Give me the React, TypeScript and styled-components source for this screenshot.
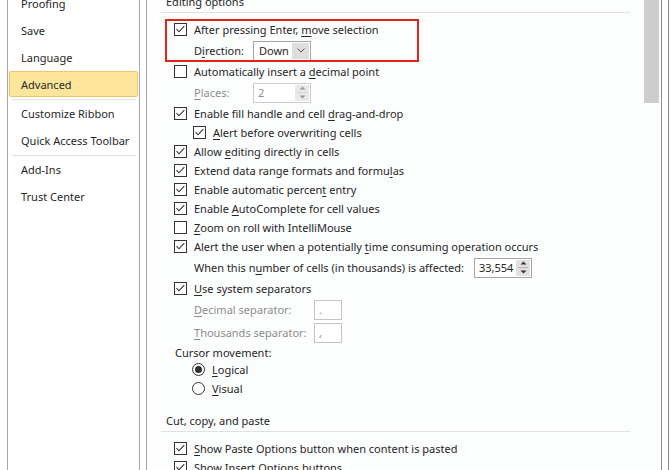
import React from "react";
import styled, { createGlobalStyle } from "styled-components";

const GlobalStyle = createGlobalStyle`
  html, body {
    margin: 0;
    padding: 0;
    background: #ffffff;
  }

  body {
    font-family: "Noto Sans", "Open Sans", sans-serif;
    font-size: 11px;
    color: #262626;
  }
`;

const navItems = [
  { label: "Proofing" },
  { label: "Save" },
  { label: "Language" },
  { label: "Advanced", active: true, divider: true },
  { label: "Customize Ribbon" },
  { label: "Quick Access Toolbar", divider: true },
  { label: "Add-Ins" },
  { label: "Trust Center" },
];

const CheckBox = ({ checked }: { checked?: boolean }) => (
  <Box>
    {checked && (
      <svg width="11" height="11" viewBox="0 0 11 11">
        <polyline
          points="1.5,5.2 4,7.8 9.3,2.2"
          fill="none"
          stroke="#333"
          strokeWidth="1.1"
        />
      </svg>
    )}
  </Box>
);

const Arrows = ({ disabled }: { disabled?: boolean }) => (
  <SpinButtons $disabled={disabled}>
    <svg width="7" height="4" viewBox="0 0 7 4">
      <polygon points="0.5,3.5 3.5,0.5 6.5,3.5" fill={disabled ? "#9a9a9a" : "#333"} />
    </svg>
    <SpinLine $disabled={disabled} />
    <svg width="7" height="4" viewBox="0 0 7 4">
      <polygon points="0.5,0.5 3.5,3.5 6.5,0.5" fill={disabled ? "#9a9a9a" : "#333"} />
    </svg>
  </SpinButtons>
);

const App = () => {
  return (
    <>
      <GlobalStyle />
      <Window>
        <Gutter $width={7} />
        <Sidebar>
          <NavList>
            {navItems.map((item) => (
              <React.Fragment key={item.label}>
                <NavItem $active={item.active}>{item.label}</NavItem>
                {item.divider && <NavDivider />}
              </React.Fragment>
            ))}
          </NavList>
        </Sidebar>
        <Gutter $width={6} />
        <Panel>
          <ScrollArea>
            <Sections>
              <SectionTitle>Editing options</SectionTitle>
              <SectionBody>
                <Highlighted>
                  <RedFrame />
                  <CheckRow>
                    <CheckBox checked />
                    <span>
                      After pressing Enter, <Key>m</Key>ove selection
                    </span>
                  </CheckRow>
                  <FieldRow>
                    <FieldLabel $width={59}>
                      D<Key>i</Key>rection:
                    </FieldLabel>
                    <Select>
                      <SelectValue>Down</SelectValue>
                      <SelectButton>
                        <svg width="8" height="5" viewBox="0 0 8 5">
                          <polyline
                            points="0.5,0.5 4,4 7.5,0.5"
                            fill="none"
                            stroke="#555"
                            strokeWidth="1"
                          />
                        </svg>
                      </SelectButton>
                    </Select>
                  </FieldRow>
                </Highlighted>
                <CheckRow>
                  <CheckBox />
                  <span>
                    Automatically insert a <Key>d</Key>ecimal point
                  </span>
                </CheckRow>
                <FieldRow>
                  <FieldLabel $width={59} $disabled>
                    <Key>P</Key>laces:
                  </FieldLabel>
                  <Spinner $disabled>
                    <SpinValue $disabled>2</SpinValue>
                    <Arrows disabled />
                  </Spinner>
                </FieldRow>
                <CheckRow>
                  <CheckBox checked />
                  <span>
                    Enable fill handle and cell <Key>d</Key>rag-and-drop
                  </span>
                </CheckRow>
                <CheckRow $indent={19}>
                  <CheckBox checked />
                  <span>
                    <Key>A</Key>lert before overwriting cells
                  </span>
                </CheckRow>
                <CheckRow>
                  <CheckBox checked />
                  <span>
                    Allow <Key>e</Key>diting directly in cells
                  </span>
                </CheckRow>
                <CheckRow>
                  <CheckBox checked />
                  <span>
                    Extend data range formats and formu<Key>l</Key>as
                  </span>
                </CheckRow>
                <CheckRow>
                  <CheckBox checked />
                  <span>
                    Enable automatic percen<Key>t</Key> entry
                  </span>
                </CheckRow>
                <CheckRow>
                  <CheckBox checked />
                  <span>
                    Enable <Key>A</Key>utoComplete for cell values
                  </span>
                </CheckRow>
                <CheckRow>
                  <CheckBox />
                  <span>
                    <Key>Z</Key>oom on roll with IntelliMouse
                  </span>
                </CheckRow>
                <CheckRow>
                  <CheckBox checked />
                  <span>
                    Alert the user when a potentially <Key>t</Key>ime consuming
                    operation occurs
                  </span>
                </CheckRow>
                <FieldRow>
                  <FieldLabel $width={280}>
                    When this n<Key>u</Key>mber of cells (in thousands) is
                    affected:
                  </FieldLabel>
                  <Spinner>
                    <SpinValue>33,554</SpinValue>
                    <Arrows />
                  </Spinner>
                </FieldRow>
                <CheckRow>
                  <CheckBox checked />
                  <span>
                    <Key>U</Key>se system separators
                  </span>
                </CheckRow>
                <FieldRow>
                  <FieldLabel $width={120} $disabled>
                    <Key>D</Key>ecimal separator:
                  </FieldLabel>
                  <SmallInput>.</SmallInput>
                </FieldRow>
                <FieldRow>
                  <FieldLabel $width={120} $disabled>
                    <Key>T</Key>housands separator:
                  </FieldLabel>
                  <SmallInput>,</SmallInput>
                </FieldRow>
                <GroupLabel>Cursor movement:</GroupLabel>
                <RadioRow>
                  <Radio $checked />
                  <span>
                    <Key>L</Key>ogical
                  </span>
                </RadioRow>
                <RadioRow>
                  <Radio />
                  <span>
                    <Key>V</Key>isual
                  </span>
                </RadioRow>
              </SectionBody>

              <SectionTitle $spaced>Cut, copy, and paste</SectionTitle>
              <SectionBody>
                <CheckRow>
                  <CheckBox checked />
                  <span>
                    <Key>S</Key>how Paste Options button when content is pasted
                  </span>
                </CheckRow>
                <CheckRow>
                  <CheckBox checked />
                  <span>
                    Show Insert <Key>O</Key>ptions buttons
                  </span>
                </CheckRow>
              </SectionBody>
            </Sections>
          </ScrollArea>
          <Scrollbar>
            <Thumb />
          </Scrollbar>
        </Panel>
        <Gutter $width={6} />
        <OuterEdge />
      </Window>
    </>
  );
};

const Window = styled.div`
  display: flex;
  width: 671px;
  height: 470px;
  overflow: hidden;
  background: #ffffff;
`;

const Gutter = styled.div<{ $width: number }>`
  flex: none;
  width: ${({ $width }) => $width}px;
`;

const Sidebar = styled.nav`
  flex: none;
  width: 131px;
  border-left: 1px solid #a6a6a6;
  border-right: 1px solid #a6a6a6;
  overflow: hidden;
`;

const NavList = styled.div`
  display: flex;
  flex-direction: column;
  margin-top: -10px;
`;

const NavItem = styled.div<{ $active?: boolean }>`
  display: flex;
  align-items: center;
  box-sizing: border-box;
  height: 27px;
  padding-left: 13px;
  white-space: nowrap;

  ${({ $active }) =>
    $active &&
    `
    height: 26px;
    margin: 0 1px 1px;
    padding-left: 11px;
    background: #fde59c;
    border: 1px solid #f1c36a;
    border-radius: 2px;
  `}
`;

const NavDivider = styled.div`
  height: 1px;
  margin: 1px 3px 0 4px;
  background: #e1e1e1;
`;

const Panel = styled.div`
  flex: none;
  display: flex;
  width: 514px;
  border-left: 1px solid #a6a6a6;
  border-right: 1px solid #8a8a8a;
  background: #fcfdfd;
`;

const ScrollArea = styled.div`
  flex: 1;
  overflow: hidden;
`;

const Sections = styled.div`
  margin-top: -10px;
  padding: 0 14px;
`;

const SectionTitle = styled.div<{ $spaced?: boolean }>`
  display: flex;
  align-items: center;
  box-sizing: border-box;
  height: 23px;
  margin-top: ${({ $spaced }) => ($spaced ? "11px" : "0")};
  padding-left: 5px;
  border-bottom: 1px solid #e1e1e1;
`;

const SectionBody = styled.div`
  display: flex;
  flex-direction: column;
  padding: 7px 0 0 13px;
`;

const Highlighted = styled.div`
  position: relative;
`;

const RedFrame = styled.div`
  position: absolute;
  left: -9px;
  top: -1px;
  width: 254px;
  height: 43px;
  box-sizing: border-box;
  border: 2px solid #e3231b;
  pointer-events: none;
`;

const Key = styled.span`
  text-decoration: underline;
  text-underline-offset: 2px;
`;

const CheckRow = styled.div<{ $indent?: number }>`
  display: flex;
  align-items: center;
  gap: 7px;
  height: 19px;
  padding-left: ${({ $indent }) => $indent ?? 0}px;
  white-space: nowrap;
`;

const Box = styled.span`
  flex: none;
  display: flex;
  align-items: center;
  justify-content: center;
  box-sizing: border-box;
  width: 13px;
  height: 13px;
  border: 1px solid #333333;
  background: #ffffff;
`;

const FieldRow = styled.div`
  display: flex;
  align-items: center;
  height: 23px;
  padding-left: 20px;
  white-space: nowrap;
`;

const FieldLabel = styled.span<{ $width: number; $disabled?: boolean }>`
  flex: none;
  width: ${({ $width }) => $width}px;
  color: ${({ $disabled }) => ($disabled ? "#8d8d8d" : "#262626")};
`;

const Select = styled.div`
  display: flex;
  box-sizing: border-box;
  width: 58px;
  height: 20px;
  padding: 1px;
  border: 1px solid #a5a5a5;
  background: #ffffff;
`;

const SelectValue = styled.span`
  flex: 1;
  display: flex;
  align-items: center;
  padding-left: 4px;
`;

const SelectButton = styled.span`
  display: flex;
  align-items: center;
  justify-content: center;
  width: 17px;
  background: #dedede;
`;

const Spinner = styled.div<{ $disabled?: boolean }>`
  display: flex;
  box-sizing: border-box;
  width: 58px;
  height: 20px;
  padding: 1px;
  border: 1px solid ${({ $disabled }) => ($disabled ? "#cccccc" : "#a5a5a5")};
  background: #ffffff;
`;

const SpinValue = styled.span<{ $disabled?: boolean }>`
  flex: 1;
  display: flex;
  align-items: center;
  padding-left: 3px;
  color: ${({ $disabled }) => ($disabled ? "#8d8d8d" : "#262626")};
`;

const SpinButtons = styled.span<{ $disabled?: boolean }>`
  display: flex;
  flex-direction: column;
  align-items: center;
  justify-content: space-evenly;
  width: 14px;
  background: ${({ $disabled }) => ($disabled ? "#e8e8e8" : "#e1e1e1")};
`;

const SpinLine = styled.span<{ $disabled?: boolean }>`
  width: 10px;
  height: 1px;
  background: ${({ $disabled }) => ($disabled ? "#d4d4d4" : "#b5b5b5")};
`;

const SmallInput = styled.div`
  display: flex;
  align-items: center;
  box-sizing: border-box;
  width: 28px;
  height: 20px;
  padding-left: 4px;
  border: 1px solid #c4c4c4;
  background: #ffffff;
  color: #8d8d8d;
`;

const GroupLabel = styled.div`
  display: flex;
  align-items: center;
  height: 16px;
  padding-left: 1px;
`;

const RadioRow = styled.div`
  display: flex;
  align-items: center;
  gap: 7px;
  height: 19px;
  padding-left: 18px;
`;

const Radio = styled.span<{ $checked?: boolean }>`
  flex: none;
  display: flex;
  align-items: center;
  justify-content: center;
  box-sizing: border-box;
  width: 13px;
  height: 13px;
  border: 1px solid #333333;
  border-radius: 50%;
  background: #ffffff;

  &::after {
    content: "";
    display: ${({ $checked }) => ($checked ? "block" : "none")};
    width: 7px;
    height: 7px;
    border-radius: 50%;
    background: #333333;
  }
`;

const Scrollbar = styled.div`
  flex: none;
  width: 17px;
`;

const Thumb = styled.div`
  width: 15px;
  height: 103px;
  background: #cdcdcd;
`;

const OuterEdge = styled.div`
  flex: none;
  width: 2px;
  border-left: 1px solid #8a8a8a;
`;

export default App;
